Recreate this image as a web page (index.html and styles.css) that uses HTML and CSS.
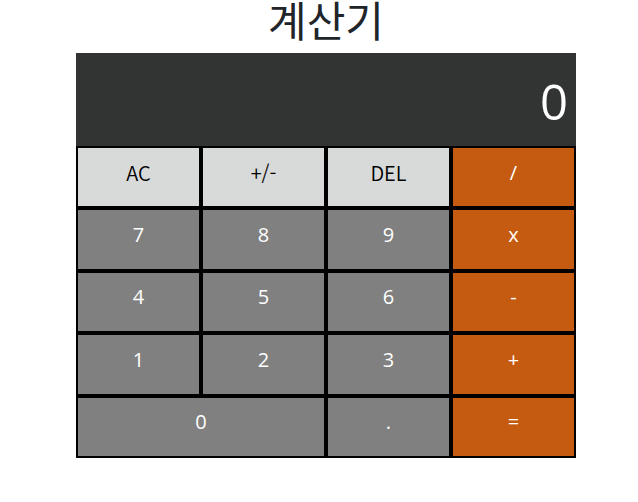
FILE: index.html
```html
<!DOCTYPE html>
<html lang="ko">
<head>
<meta charset="utf-8">
<title>계산기</title>
<meta name="viewport" content="width=device-width, initial-scale=1">
<link rel="stylesheet" href="styles.css">
</head>
<body>
<main class="page">
  <h1 class="title">계산기</h1>
  <section class="calculator" aria-label="계산기">
    <output class="display">0</output>
    <div class="keys">
      <button type="button" class="key key-light">AC</button>
      <button type="button" class="key key-light">+/-</button>
      <button type="button" class="key key-light">DEL</button>
      <button type="button" class="key key-operator">/</button>
      <button type="button" class="key">7</button>
      <button type="button" class="key">8</button>
      <button type="button" class="key">9</button>
      <button type="button" class="key key-operator">x</button>
      <button type="button" class="key">4</button>
      <button type="button" class="key">5</button>
      <button type="button" class="key">6</button>
      <button type="button" class="key key-operator">-</button>
      <button type="button" class="key">1</button>
      <button type="button" class="key">2</button>
      <button type="button" class="key">3</button>
      <button type="button" class="key key-operator">+</button>
      <button type="button" class="key key-wide">0</button>
      <button type="button" class="key">.</button>
      <button type="button" class="key key-operator">=</button>
    </div>
  </section>
</main>
</body>
</html>
```
FILE: styles.css
```css
* {
  box-sizing: border-box;
}

body {
  margin: 0;
  background: #fff;
  color: #212529;
  font-family: "Open Sans", "Noto Sans CJK KR", sans-serif;
}

.page {
  display: flex;
  flex-direction: column;
  align-items: center;
  padding-left: 14px;
}

.title {
  margin: 0 0 15px;
  font-family: "Noto Sans CJK KR", sans-serif;
  font-size: 42px;
  font-weight: 400;
  line-height: 38px;
}

.calculator {
  width: 100%;
  max-width: 500px;
}

.display {
  display: block;
  padding: 16px 8px 12px;
  background: #323433;
  color: #fff;
  font-size: 49px;
  line-height: 65px;
  text-align: right;
}

.keys {
  display: grid;
  grid-template-columns: repeat(4, 1fr);
  grid-template-rows: repeat(5, 1fr);
  height: 312px;
}

.key {
  padding: 0 0 9px;
  border: 2px solid #000;
  border-radius: 0;
  background: #808080;
  color: #fff;
  font: inherit;
  font-size: 20px;
  font-weight: 500;
  line-height: 28px;
}

.key-light {
  background: #d8dad9;
  color: #000;
  font-family: "Noto Sans CJK KR", sans-serif;
  font-weight: 350;
}

.key-operator {
  background: #c55a11;
}

.key-wide {
  grid-column: span 2;
}
```
